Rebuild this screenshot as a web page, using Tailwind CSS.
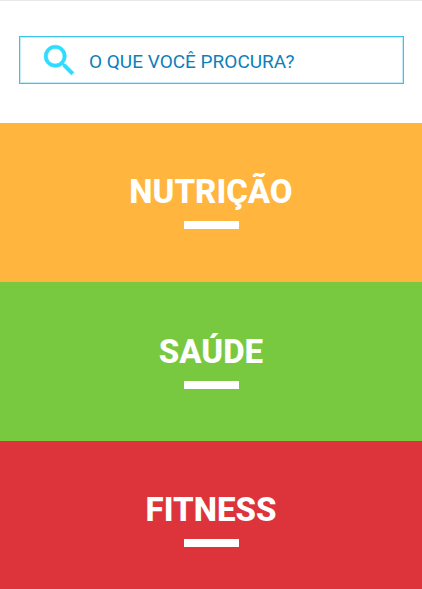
<!DOCTYPE html>
<html lang="pt-BR">
<head>
<meta charset="utf-8">
<meta name="viewport" content="width=device-width, initial-scale=1">
<title>Nutrição, Saúde e Fitness</title>
<script src="https://cdn.jsdelivr.net/npm/@tailwindcss/browser@4"></script>
</head>
<body class="h-screen overflow-hidden bg-white font-['Roboto',sans-serif]">
<header class="border-t border-[#e8e8e8] pt-[35px] pr-[18px] pb-[39px] pl-[19px]">
  <form role="search" class="flex h-12 items-center border border-[#3fc0e8] pl-[19px] inset-ring inset-ring-[#c5ebf9]">
    <button type="button" aria-label="Buscar" class="shrink-0">
      <svg class="size-[41px] fill-[#2fdcff] stroke-[#2fdcff] stroke-[0.35]" viewBox="0 0 24 24" aria-hidden="true"><path d="M15.5 14h-.79l-.28-.27A6.471 6.471 0 0 0 16 9.500 6.500 6.500 0 1 0 9.500 16c1.610 0 3.090-.59 4.230-1.570l.27.28v.79l5 4.990L20.490 19l-4.990-5zm-6 0C7.010 14 5 11.990 5 9.500S7.010 5 9.500 5 14 7.010 14 9.500 11.990 14 9.500 14z"/></svg>
    </button>
    <input type="text" aria-label="O que você procura?" placeholder="O QUE VOCÊ PROCURA?" class="ml-[9px] h-full min-w-0 flex-1 pt-0.5 text-[19px] text-[#0f7fba] outline-none placeholder:text-[#0f7fba]">
  </form>
</header>
<main>
  <a href="#nutricao" class="flex h-[159px] flex-col items-center bg-[#ffb53e] pt-[49px] text-white">
    <h2 class="text-[33px] leading-10 font-extrabold">NUTRIÇÃO</h2>
    <span class="mt-[9px] h-2 w-[55px] bg-white"></span>
  </a>
  <a href="#saude" class="flex h-[159px] flex-col items-center bg-[#79c940] pt-[50px] text-white">
    <h2 class="text-[33px] leading-10 font-extrabold">SAÚDE</h2>
    <span class="mt-[9px] h-2 w-[55px] bg-white"></span>
  </a>
  <a href="#fitness" class="flex h-[159px] flex-col items-center bg-[#dd343c] pt-[49px] text-white">
    <h2 class="text-[33px] leading-10 font-extrabold">FITNESS</h2>
    <span class="mt-[9px] h-2 w-[55px] bg-white"></span>
  </a>
</main>
</body>
</html>
